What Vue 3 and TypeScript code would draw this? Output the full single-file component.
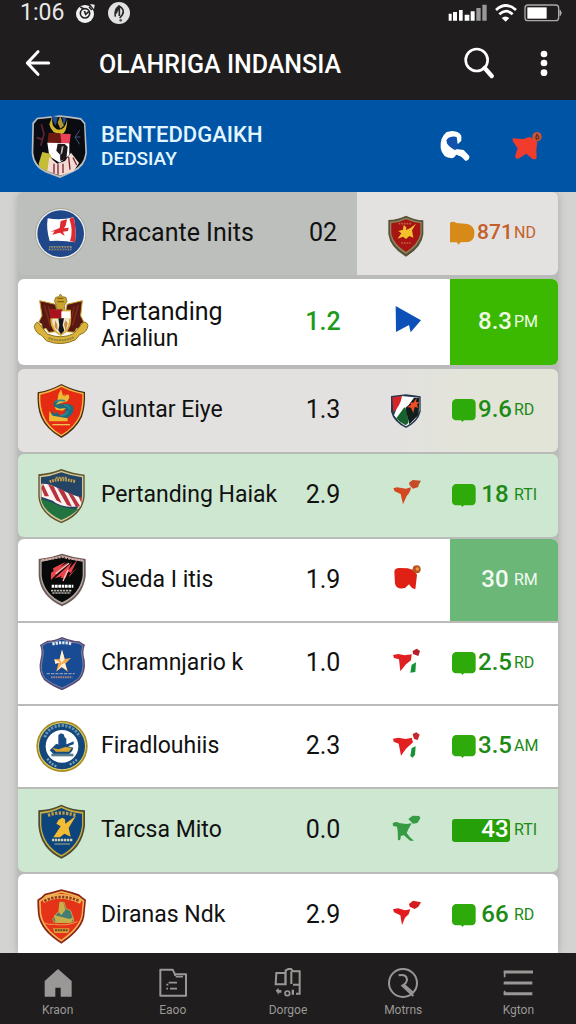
<script setup lang="ts">
interface Row {
  id: string
  name: string[]
  value: string
  stat: string
  unit: string
  tone: string
  crestBox: string
  markBox: string
  badge: 'bubble' | 'bell' | 'bar' | 'none'
}

const rows: Row[] = [
  { id: 'r1', name: ['Rracante Inits'], value: '02', stat: '871', unit: 'ND', tone: 'split', crestBox: '106 46 156 168', markBox: '306 70 96 120', badge: 'bell' },
  { id: 'r2', name: ['Pertanding', 'Arialiun'], value: '1.2', stat: '8.3', unit: 'PM', tone: 'featured', crestBox: '106 315 156 168', markBox: '306 339 96 120', badge: 'none' },
  { id: 'r3', name: ['Gluntar Eiye'], value: '1.3', stat: '9.6', unit: 'RD', tone: 'stone', crestBox: '106 54 156 168', markBox: '306 78 96 120', badge: 'bubble' },
  { id: 'r4', name: ['Pertanding Haiak'], value: '2.9', stat: '18', unit: 'RTI', tone: 'mint', crestBox: '106 309 156 168', markBox: '306 333 96 120', badge: 'bubble' },
  { id: 'r5', name: ['Sueda I itis'], value: '1.9', stat: '30', unit: 'RM', tone: 'solid', crestBox: '106 52 156 168', markBox: '306 76 96 120', badge: 'none' },
  { id: 'r6', name: ['Chramnjario k'], value: '1.0', stat: '2.5', unit: 'RD', tone: 'flat', crestBox: '106 303 156 168', markBox: '306 327 96 120', badge: 'bubble' },
  { id: 'r7', name: ['Firadlouhiis'], value: '2.3', stat: '3.5', unit: 'AM', tone: 'flat', crestBox: '106 57 156 168', markBox: '306 81 96 120', badge: 'bubble' },
  { id: 'r8', name: ['Tarcsa Mito'], value: '0.0', stat: '43', unit: 'RTI', tone: 'mint end', crestBox: '106 307 156 168', markBox: '306 331 96 120', badge: 'bar' },
  { id: 'r9', name: ['Diranas Ndk'], value: '2.9', stat: '66', unit: 'RD', tone: 'plain', crestBox: '106 559 156 168', markBox: '306 583 96 120', badge: 'bubble' },
]

const tabs = [
  { id: 'home', label: 'Kraon' },
  { id: 'folder', label: 'Eaoo' },
  { id: 'group', label: 'Dorgoe' },
  { id: 'search', label: 'Motrns' },
  { id: 'menu', label: 'Kgton' },
]
</script>

<template>
  <div class="app">
    <svg class="sprite" aria-hidden="true">
      <symbol id="crest-r1" viewBox="106 46 156 168">
        <circle cx="183" cy="129" r="77" fill="#a9a99a" />
        <circle cx="183" cy="129" r="74" fill="#eef0ee" />
        <circle cx="183" cy="129" r="70" fill="#1f4789" />
        <path d="M144 83 Q182 90 222 80 Q231 115 226 155 Q188 148 150 151 Q139 115 144 83Z" fill="#fff" />
        <path d="M209 84 L222 80 Q231 115 226 155 L211 151 Q222 120 209 84Z" fill="#df2b30" />
        <path d="M183 91 L202 86 L198 105 L193 113 L207 111 L205 121 L190 123 L195 136 L181 126 L158 132 L165 122 L152 123 L180 112Z" fill="#df2b30" />
        <path d="M148 167h68v5h-68zM147 174h69v5h-69z" fill="#b9b18f" opacity=".75" />
        <path d="M150 170h62M152 177h60" stroke="#3b3f4b" stroke-width="3" stroke-dasharray="5 3" />
      </symbol>
      <symbol id="crest-r2" viewBox="106 315 156 168">
        <path d="M120 335 L168 346 L176 390 L168 428 L147 430 L139 418 L128 422 L126 405 L117 400 L127 380Z" fill="#571712" stroke="#c9a52e" stroke-width="3" />
        <path d="M248 335 L202 346 L194 390 L202 428 L224 430 L231 418 L242 422 L244 405 L253 400 L243 380Z" fill="#571712" stroke="#c9a52e" stroke-width="3" />
        <path d="M134 348l18 62M146 352l14 56M236 348l-18 62M224 352l-14 56" stroke="#7d2a18" stroke-width="5" />
        <path d="M182 315l7 8 10 2 3 12-7 12v12h-24v-12l-7-12 4-12 9-2z" fill="#c9a52e" stroke="#76641b" stroke-width="2" />
        <path d="M174 328h17M173 338h20" stroke="#856515" stroke-width="4" />
        <path d="M152 362h62v35q-1 30-31 44-29-14-31-44z" fill="#d6ac31" />
        <path d="M151 361h37v27h-37z" fill="#a9131d" />
        <path d="M185 367h27v22h-27z" fill="#fff" />
        <path d="M158 389h50v12q-5 24-25 35-20-12-25-35z" fill="#efe7d0" />
        <path d="M176 388h17l-4 20 5 17-10 11-8-12 3-15z" fill="#171519" />
        <path d="M166 393l7 14v17l-8-10zM198 394l6 9-6 22-5-19z" fill="#c58a40" />
        <path d="M104 412 Q110 391 121 408 L143 435 Q184 452 222 434 L245 407 Q257 390 265 409 Q263 430 240 437 L228 452 Q183 474 140 455 L126 439 Q108 434 104 412Z" fill="#dbb33a" stroke="#8a7322" stroke-width="3" />
        <path d="M147 447 Q183 462 222 445" fill="none" stroke="#8d833b" stroke-width="6" stroke-dasharray="6 2" />
      </symbol>
      <symbol id="crest-r3" viewBox="106 54 156 168">
        <path d="M185 57 Q220 75 256 81 Q258 124 247 155 Q229 194 185 219 Q139 193 124 157 Q111 126 114 82 Q154 75 185 57Z" fill="#4a2c14" />
        <path d="M185 61 Q218 78 252 84 Q254 124 243 154 Q226 190 185 214 Q143 190 128 155 Q115 124 118 85 Q154 78 185 61Z" fill="#f2ba45" />
        <path d="M185 66 Q216 82 248 88 Q249 125 239 152 Q223 187 185 209 Q146 186 132 152 Q121 125 122 89 Q156 82 185 66Z" fill="#e52b12" />
        <path d="M204 91 Q162 101 161 119 Q167 136 196 132 Q203 143 181 153 L173 141 Q162 153 158 137 Q149 154 157 159 Q184 174 204 158 Q228 144 220 124 Q208 111 184 119 Q185 107 210 103Z" fill="#1d6b7e" />
        <path d="M184 72l6 20 7-6-7 15-17 6 3-18zM203 88q12 4 0 21l-35 10q21-23 35-31zM149 138l10 14 45 8v9h-56zM165 125l14 6 20-2-10 8-20-3z" fill="#efb934" />
        <path d="M167 110q18-7 29-2M193 120q16 2 17 13M183 151q17 1 22-13" fill="none" stroke="#2d8b91" stroke-width="5" />
        <path d="M158 179h53" stroke="#f0c151" stroke-width="4" />
      </symbol>
      <symbol id="crest-r4" viewBox="106 309 156 168">
        <path d="M185 312 Q216 324 255 329 V394 Q251 448 185 475 Q119 447 116 394 V328 Q153 325 185 312Z" fill="#5d552f" />
        <path d="M185 317 Q216 329 251 333 V394 Q247 443 185 470 Q123 443 120 394 V333 Q153 330 185 317Z" fill="#d7ca97" />
        <path d="M185 322 Q216 333 247 337 V393 Q243 438 185 464 Q127 438 124 393 V337 Q154 334 185 322Z" fill="#244465" />
        <path d="M125 356 Q150 355 180 372 T246 398 L243 424 Q184 430 159 407 L125 395Z" fill="#fff2ef" />
        <path d="M125 370l10 24h13l-18-38zM145 358l25 48 16 9-24-51zM173 369l29 51 15 5-25-49zM204 382l25 44 12-3-21-33zM237 395l8 19 2-18z" fill="#b53440" />
        <path d="M124 401 L158 413 Q195 432 236 432 Q215 454 185 464 Q132 441 124 401Z" fill="#217440" />
        <path d="M150 350q34-12 78 0" fill="none" stroke="#c8a44d" stroke-width="9" stroke-dasharray="5 3" />
        <path d="M168 338h34" stroke="#b99a51" stroke-width="6" stroke-dasharray="6 3" />
      </symbol>
      <symbol id="crest-r5" viewBox="106 52 156 168">
        <path d="M187 57 Q219 68 258 73 V125 Q250 188 187 215 Q123 186 117 125 V73 Q155 69 187 57Z" fill="#6e5a58" />
        <path d="M187 62 Q218 73 253 77 V124 Q245 183 187 209 Q129 182 122 124 V77 Q156 73 187 62Z" fill="#b3aaa6" />
        <path d="M187 65 Q218 77 249 81 V124 Q241 178 187 203 Q133 178 126 124 V81 Q156 77 187 65Z" fill="#080909" />
        <path d="M126 77q34-6 62-10 31 7 60 10" stroke="#d9aaa2" stroke-width="6" fill="none" stroke-dasharray="7 3" />
        <path d="M160 101l38-20-35 35zM154 114l52-32-52 54zM165 131l52-48-31 42zM182 131l34-49-18 47zM203 110l30-34-19 39zM210 120l24-23-26 30z" fill="#ec444d" />
        <path d="M168 117l40-31M190 139l15-34" stroke="#ffc8c2" stroke-width="4" />
        <path d="M156 155h65" stroke="#fff" stroke-width="9" stroke-dasharray="8 2" />
        <path d="M154 168h62M158 175h55" stroke="#b6b3ac" stroke-width="5" stroke-dasharray="7 2" />
      </symbol>
      <symbol id="crest-r6" viewBox="106 303 156 168">
        <path d="M187 306 Q216 318 239 319 Q248 326 256 329 Q247 350 255 375 Q260 411 240 435 Q221 450 187 466 Q155 453 133 435 Q113 410 123 370 Q129 349 121 330 Q132 322 143 317 Q166 317 187 306Z" fill="#5b4973" />
        <path d="M187 312 Q214 324 238 325 L249 332 Q242 351 249 376 Q254 409 236 431 Q217 446 187 459 Q156 446 137 431 Q119 409 128 374 Q134 349 127 332 L143 323 Q166 323 187 312Z" fill="#184b93" stroke="#93a0b4" stroke-width="2" />
        <path d="M187 344l8 28 19-3-17 17 8 25-19-15-16 14 6-25-13-13 17 1z" fill="#f6a84f" />
        <path d="M187 344l8 28-9 13-6-13zM186 388l10-4 6 22-16-10-15 12zM164 373l18 9-15 5z" fill="#fff0d2" />
        <path d="M158 327q29-8 59 0" stroke="#e4ecf1" stroke-width="9" fill="none" stroke-dasharray="7 3" />
        <path d="M141 416h84" stroke="#8d9cae" stroke-width="4" stroke-dasharray="10 3" />
        <path d="M154 427h64" stroke="#a68384" stroke-width="6" stroke-dasharray="5 2" />
      </symbol>
      <symbol id="crest-r7" viewBox="106 57 156 168">
        <circle cx="187" cy="139" r="77" fill="#a88d24" />
        <circle cx="187" cy="139" r="72" fill="#e2d26e" />
        <circle cx="187" cy="139" r="69" fill="#13477c" />
        <circle cx="187" cy="139" r="49" fill="#fff" />
        <path d="M135 112 Q147 79 186 76 Q225 78 239 110" fill="none" stroke="#6893ad" stroke-width="9" stroke-dasharray="7 4" />
        <path d="M143 176 Q154 193 171 199M210 193 Q226 187 234 175" fill="none" stroke="#86a4b5" stroke-width="7" stroke-dasharray="6 4" />
        <path d="M176 106l7-6 9 3 3 9 5 4v20h-24z" fill="#164b84" />
        <path d="M150 151l20-20q20 10 52-7v9l-17 6 16 4q-1 10-13 20h-46z" fill="#174981" />
        <path d="M158 144l19 4 20-7 20 2-9 12h-39z" fill="#d5a52f" />
        <path d="M155 165h66" stroke="#557d8e" stroke-width="8" />
      </symbol>
      <symbol id="crest-r8" viewBox="106 307 156 168">
        <path d="M185 312 Q216 327 256 329 V375 Q248 444 185 474 Q122 444 116 375 V329 Q154 327 185 312Z" fill="#4b4a32" />
        <path d="M185 317 Q216 332 251 334 V375 Q243 439 185 468 Q127 439 121 375 V334 Q155 332 185 317Z" fill="#c8ac41" />
        <path d="M185 322 Q216 337 247 339 V375 Q239 434 185 463 Q131 434 125 375 V339 Q155 337 185 322Z" fill="#0c447b" />
        <path d="M145 344q35-14 85 0" fill="none" stroke="#bd9a4a" stroke-width="10" stroke-dasharray="7 4" />
        <path d="M177 357l11-6 8 5 1 13 32-24-22 37 6 26-19-9-13 11h-20l22-33-13-8z" fill="#f4bc32" />
        <path d="M157 418h61" stroke="#d0d0b4" stroke-width="8" stroke-dasharray="7 2" />
        <path d="M164 430h47" stroke="#829484" stroke-width="4" />
      </symbol>
      <symbol id="crest-r9" viewBox="106 559 156 168">
        <path d="M185 563 Q215 570 238 578 Q247 587 259 594 Q257 614 255 634 Q254 681 185 726 Q121 687 115 638 Q113 616 113 594 Q127 586 135 576 Q159 571 185 563Z" fill="#8b2518" />
        <path d="M185 568 Q215 575 236 583 L254 597 L250 635 Q248 678 185 720 Q126 682 120 637 L118 597 Q132 589 138 581 Q162 575 185 568Z" fill="#f2b451" />
        <path d="M185 573 Q214 580 234 588 L249 600 L246 635 Q243 674 185 714 Q131 679 125 636 L123 600 L140 586 Q163 580 185 573Z" fill="#e53319" />
        <path d="M130 598 Q179 569 244 600" fill="none" stroke="#efb252" stroke-width="14" />
        <path d="M134 598 Q181 574 240 598" fill="none" stroke="#8e3922" stroke-width="8" stroke-dasharray="7 4" />
        <path d="M181 602l13 1 4 17 15 7 10 31-15 5-44-1-5-9 13-19 9-5z" fill="#457c74" stroke="#c4a13d" stroke-width="3" />
        <path d="M180 600l11 2 6 24-13 15-8-12zM163 640l47 12 13-6-9 17h-46z" fill="#c7b04b" />
        <path d="M134 664q12 6 31 4 37 6 68-8" fill="none" stroke="#eb9b52" stroke-width="3" />
        <path d="M160 680h50l-4 14h-42z" fill="#dc9e3d" />
        <path d="M166 686h39" stroke="#664a20" stroke-width="6" stroke-dasharray="6 2" />
      </symbol>

      <symbol id="mark-r1" viewBox="306 70 96 120">
        <path d="M354 75 Q378 87 406 89 V131 Q401 171 354 198 Q307 172 301 131 V88 Q330 87 354 75Z" fill="#56533a" />
        <path d="M354 81 Q378 91 401 94 V130 Q395 164 354 190 Q313 166 306 130 V93 Q331 92 354 81Z" fill="#918358" />
        <path d="M354 86 Q377 96 397 98 V130 Q390 160 354 184 Q317 160 310 130 V98 Q333 96 354 86Z" fill="#a71414" />
        <path d="M347 103l8 7-1 8 12-5 18-14-12 20 4 22-12-5-10 9-9-7-16 6 11-16-9-7 14-4z" fill="#f2c32d" />
        <path d="M332 99h40M340 157h28" stroke="#c3633e" stroke-width="5" stroke-dasharray="5 3" />
      </symbol>
      <symbol id="mark-r2" viewBox="306 339 96 120">
        <path d="M323 351 L399 394 L368 430 L363 408 L324 429Z" fill="#0b51b7" />
      </symbol>
      <symbol id="mark-r3" viewBox="306 78 96 120">
        <path d="M354 88 Q378 91 398 94 V140 Q391 170 354 189 Q316 170 309 140 V93Z" fill="#28394f" />
        <path d="M340 93 L394 98 V138 Q388 166 354 184 Q341 177 332 168 L318 151Z" fill="#fff" />
        <path d="M313 97 L342 93 Q338 121 316 142Z" fill="#d32627" />
        <path d="M325 160 L349 127 Q359 137 361 174 L353 181Q336 174 325 160Z" fill="#16612d" />
        <path d="M362 120 L378 98 L394 99 L392 149 L364 178 L352 129Z" fill="#101f1c" />
        <path d="M386 98l-2 14 10-2-7 9 4 9-11-2-4 18-7-16-11-2 12-7-5-7 11 1z" fill="#f04c25" />
      </symbol>
      <symbol id="mark-r4" viewBox="306 333 96 120">
        <path d="M316 370 L327 367 L354 371 L369 367 Q367 383 356 393 L345 418 L338 387 L320 379Z" fill="#d44820" />
        <path d="M363 353 L374 345 L399 347 L392 359 L391 366 L375 371 L365 361Z" fill="#c64c27" />
      </symbol>
      <symbol id="mark-r5" viewBox="306 76 96 120">
        <path d="M319 111 Q320 100 334 100 L359 101 L376 106 L387 120 L382 164 L372 160 L363 149 L351 160 Q326 166 321 147Z" fill="#df2014" />
        <circle cx="386" cy="104" r="12" fill="#b95422" />
        <circle cx="388" cy="103" r="5" fill="#ec9840" />
      </symbol>
      <symbol id="mark-r6" viewBox="306 327 96 120">
        <path d="M315 360 L331 357 L350 361 L371 358 L369 376 L354 388 L337 409 L333 373 L318 369Z" fill="#e02020" />
        <path d="M374 348 L386 341 L396 348 L391 363 L375 357Z" fill="#b91d2a" />
        <path d="M371 389 L384 382 L382 411 L367 413Z" fill="#159334" />
      </symbol>
      <symbol id="mark-r7" viewBox="306 81 96 120">
        <path d="M315 116 L331 113 L353 117 L371 113 L375 127 L354 146 L339 167 L332 131 L317 125Z" fill="#e32020" />
        <path d="M374 102 L385 97 L395 104 L389 120 L378 117Z" fill="#c92730" />
        <path d="M371 144 L383 139 L381 164 L374 173 L367 168Z" fill="#159334" />
      </symbol>
      <symbol id="mark-r8" viewBox="306 331 96 120">
        <path d="M314 368 Q325 361 333 367 L355 370 L371 368 L361 386 L356 397 L366 410 L378 420 L366 420 L348 404 L339 405 L336 419 L330 418 L329 391 L327 378 L315 376Z" fill="#369b42" />
        <path d="M361 355 L374 345 L394 346 L397 353 L388 367 L375 369Z" fill="#369b42" />
      </symbol>
      <symbol id="mark-r9" viewBox="306 583 96 120">
        <path d="M315 623 L330 620 L351 626 L367 623 L362 638 L351 648 L342 670 L337 641 L318 632Z" fill="#e01c1f" />
        <path d="M363 607 L375 597 L399 602 L391 615 L380 622 L365 615Z" fill="#d41c20" />
      </symbol>

      <symbol id="badge-bubble" viewBox="492 96 72 72">
        <path d="M502 99h50q11 2 11 13v40q-1 9-9 11h-26l-5 5-4-5h-18q-8-2-9-10v-43q1-8 10-11z" fill="#2eaa0a" />
      </symbol>
      <symbol id="badge-bell" viewBox="483 92 78 72">
        <path d="M486 97 Q495 91 505 98 L539 101 Q560 108 559 128 Q560 151 541 155 L517 156 L512 163 L506 156 H486Z" fill="#d88a18" />
      </symbol>

      <symbol id="tab-home" viewBox="125 70 90 90">
        <path d="M170 73l41 36v47h-33v-27h-16v27h-32v-47z" fill="currentColor" />
      </symbol>
      <symbol id="tab-folder" viewBox="465 70 90 90">
        <path d="M472 75h37l7 14h33v64h-77z" fill="none" stroke="currentColor" stroke-width="6" stroke-linejoin="round" />
        <path d="M516 94v-8M518 96h22M497 114h25M490 132h5M501 132h21M490 120h6" stroke="currentColor" stroke-width="5" />
      </symbol>
      <symbol id="tab-group" viewBox="810 70 90 90">
        <path d="M820 85h27v34h-29zM848 122V77l8-4h8l7 7h19v40h-20M890 120v27h-11M865 80v38" fill="none" stroke="currentColor" stroke-width="6" />
        <path d="M818 137l9-7v6h8v8h-8v7zM866 150v-15h7v15z" fill="currentColor" />
        <circle cx="853" cy="146" r="7" fill="none" stroke="currentColor" stroke-width="5" />
      </symbol>
      <symbol id="tab-search" viewBox="304 70 90 90">
        <circle cx="349" cy="115" r="42" fill="none" stroke="currentColor" stroke-width="6" />
        <path d="M336 92q23-5 25 12 0 12-14 19l33 31M354 122l26 23" fill="none" stroke="currentColor" stroke-width="6" />
      </symbol>
      <symbol id="tab-menu" viewBox="654 70 90 90">
        <path d="M656 82h88M656 115h86M656 147h86" stroke="currentColor" stroke-width="9" />
        <path d="M659 82v16M659 138v10" stroke="currentColor" stroke-width="5" />
      </symbol>
    </svg>

    <div class="status">
      <div class="status-left">
        <span class="time">1:06</span>
        <svg width="22" height="22" viewBox="225 2 66 66" aria-hidden="true">
          <circle cx="255" cy="38" r="27" fill="#f2f2f2" />
          <path d="M270 8l14 2-2 14z" fill="#f2f2f2" />
          <circle cx="255" cy="36" r="14" fill="none" stroke="#252424" stroke-width="5" />
          <path d="M241 17l11 6M267 17l9 9M253 29l4 10 9-8" stroke="#252424" stroke-width="5" fill="none" />
        </svg>
        <svg width="22" height="22" viewBox="323 2 66 66" aria-hidden="true">
          <circle cx="356" cy="35" r="33" fill="#e2e2e2" />
          <path d="M345 46q-4-20 11-32 20 10 9 28l-7 8M357 17v27M347 36l8-18" fill="none" stroke="#292828" stroke-width="5" />
          <circle cx="361" cy="57" r="4" fill="#555" />
        </svg>
      </div>
      <div class="status-right">
        <svg width="40" height="18" viewBox="480 12 120 54" aria-hidden="true">
          <path d="M482 41h9v21h-9zM495 36h12v26h-12zM513 30h11v32h-11zM530 44h14v18h-14zM548 34h12v28h-12z" fill="#fff" />
          <path d="M565 24h13v38h-13zM583 14h13v48h-13z" fill="#999" />
        </svg>
        <svg width="22" height="18" viewBox="619 10 66 54" aria-hidden="true">
          <path d="M622 28q29-27 60 0M632 41q20-19 40 0" fill="none" stroke="#fff" stroke-width="8" />
          <path d="M639 52q11-9 23 0l-11 11z" fill="#fff" />
        </svg>
        <svg width="39" height="18" viewBox="708 10 117 54" aria-hidden="true">
          <rect x="711" y="13" width="101" height="47" rx="9" fill="none" stroke="#aaa" stroke-width="4" />
          <path d="M718 20h58v34h-58z" fill="#fff" />
          <path d="M816 29q8 7 0 16z" fill="#aaa" stroke="#aaa" stroke-width="3" />
        </svg>
      </div>
    </div>

    <header class="toolbar">
      <button class="back" type="button" aria-label="Kembali">
        <svg width="28" height="28" viewBox="71 148 84 84">
          <path d="M145 190H84M113 156l-32 34 32 34" fill="none" stroke="#fff" stroke-width="9" stroke-linecap="round" stroke-linejoin="round" />
        </svg>
      </button>
      <h1>OLAHRIGA INDANSIA</h1>
      <button type="button" aria-label="Cari">
        <svg width="32" height="32" viewBox="523 143 96 96">
          <circle cx="564" cy="182" r="33" fill="none" stroke="#fff" stroke-width="8" />
          <path d="M588 206l21 24" stroke="#fff" stroke-width="13" stroke-linecap="round" />
        </svg>
      </button>
      <button class="more" type="button" aria-label="Menu lainnya">
        <svg width="8" height="28" viewBox="755 148 24 84">
          <circle cx="767" cy="163" r="10" fill="#fff" />
          <circle cx="767" cy="190" r="10" fill="#fff" />
          <circle cx="767" cy="219" r="10" fill="#fff" />
        </svg>
      </button>
    </header>

    <section class="banner">
      <svg width="58" height="66" viewBox="94 340 174 198" aria-hidden="true">
        <path d="M181 347 Q214 350 244 355 L257 370 L262 460 Q258 501 221 517 L181 535 L139 519 Q99 502 96 460 L98 369 L112 354Z" fill="#b9bdc0" />
        <path d="M181 352 Q214 355 242 360 L253 373 L257 460 Q252 497 219 512 L181 529 L141 513 Q104 497 101 460 L103 372 L114 359Z" fill="#0b0c11" />
        <path d="M158 350q-4 31 13 39 25 7 32-31-1 42-17 45-31 1-37-29z" fill="#d1b629" />
        <path d="M155 348q5 19 13 30l7-26zM187 351q6 15 2 33l11-27z" fill="#234f92" />
        <path d="M174 369l8-21 10 30-10 9z" fill="#b39a2a" />
        <path d="M147 399l36 2 1 31h-41z" fill="#6d1a13" />
        <path d="M182 402l31 1-3 27-25 3z" fill="#ed4059" />
        <path d="M143 429 L209 431 L209 466 L180 489 L149 470Z" fill="#fff" />
        <path d="M174 432l21 1 9 8-4 36-18 7-1-19-11-12z" fill="#1b171a" />
        <path d="M186 441l6-2-4 20-6 9z" fill="#bbb" />
        <path d="M117 492 L128 457 L151 462 L158 480 L147 517 L120 503Z" fill="#c6bd36" />
        <path d="M149 472 L173 492 L196 484 L214 459 L238 490 L222 514 L181 528 L143 514Z" fill="#f2dbd4" />
        <path d="M163 492v29M175 494v31M190 492v28M207 472l4 38M220 474l11 22" stroke="#7e2632" stroke-width="4" />
        <path d="M240 392l-14 20 14 22M226 412h16" stroke="#45557e" stroke-width="3" fill="none" />
        <path d="M125 374l8 30-10 34M111 414l16 5" stroke="#612332" stroke-width="5" fill="none" />
      </svg>
      <h2><span>BENTEDDGAIKH</span><small>DEDSIAY</small></h2>
      <button type="button" aria-label="Telepon">
        <svg width="32" height="32" viewBox="452 384 96 96">
          <path d="M492 387 Q512 388 519 401 L519 416 L508 427 L505 405 Q486 400 475 415 Q473 430 493 438 L505 453 Q503 465 491 469 Q462 468 457 438 Q454 407 475 390Z" fill="#fff" />
          <path d="M497 440l29 4 17 18q2 12-11 15l-13-13-20-8z" fill="#fff" />
          <path d="M475 415q7-14 26-8l10 32-11 5q-21-8-25-29z" fill="#1252ad" />
        </svg>
      </button>
      <button class="favorite" type="button" aria-label="Favorit">
        <svg width="32" height="32" viewBox="668 384 96 96">
          <path d="M673 409 L692 410 L707 411 L721 405 L741 410 L747 421 L744 443 L745 468 Q740 475 732 471 L714 455 L690 470 Q679 471 681 460 L688 439 L673 417Z" fill="#f03b2d" />
          <circle cx="746" cy="404" r="14" fill="#c75735" />
          <path d="M746 397q-5 7-2 15 9-1 7-7z" fill="none" stroke="#6d2a27" stroke-width="4" />
        </svg>
      </button>
    </section>

    <main class="content">
      <ul class="rows">
        <li v-for="row in rows" :key="row.id" class="row" :class="row.tone">
          <svg class="crest" width="52" height="56" :viewBox="row.crestBox" aria-hidden="true">
            <use :href="'#crest-' + row.id" :x="row.crestBox.split(' ')[0]" :y="row.crestBox.split(' ')[1]" width="156" height="168" />
          </svg>
          <h3 class="name"><span v-for="line in row.name" :key="line">{{ line }}</span></h3>
          <span class="value">{{ row.value }}</span>
          <svg class="mark" width="32" height="40" :viewBox="row.markBox" aria-hidden="true">
            <use :href="'#mark-' + row.id" :x="row.markBox.split(' ')[0]" :y="row.markBox.split(' ')[1]" width="96" height="120" />
          </svg>
          <div class="stat" :class="row.badge">
            <span class="badge">
              <svg v-if="row.badge === 'bubble'" width="24" height="24" aria-hidden="true"><use href="#badge-bubble" width="24" height="24" /></svg>
              <svg v-if="row.badge === 'bell'" width="26" height="24" aria-hidden="true"><use href="#badge-bell" width="26" height="24" /></svg>
            </span>
            <span class="number">{{ row.stat }}</span>
            <span class="unit">{{ row.unit }}</span>
          </div>
        </li>
      </ul>
    </main>

    <nav class="tabs" aria-label="Navigasi utama">
      <a v-for="tab in tabs" :key="tab.id" :href="'#' + tab.id">
        <svg width="30" height="30" aria-hidden="true"><use :href="'#tab-' + tab.id" width="30" height="30" /></svg>
        <span>{{ tab.label }}</span>
      </a>
    </nav>
  </div>
</template>

<style>
body {
  margin: 0;
  background: #d3d4d2;
}
</style>

<style scoped>
.app {
  display: flex;
  flex-direction: column;
  height: 100vh;
  overflow: hidden;
  background: #d3d4d2;
  color: #111;
  font-family: Roboto, "Liberation Sans", sans-serif;
}
.sprite {
  position: absolute;
  width: 0;
  height: 0;
}
.sprite symbol,
.crest,
.mark {
  overflow: visible;
}
svg {
  display: block;
  flex: none;
}
button {
  display: flex;
  padding: 0;
  border: 0;
  background: none;
  cursor: pointer;
}
h1,
h2,
h3 {
  margin: 0;
  font-weight: 400;
}
.status {
  display: flex;
  flex: none;
  justify-content: space-between;
  height: 26px;
  padding: 0 13px 0 20px;
  background: #1f1d1d;
}
.status-left,
.status-right {
  display: flex;
  align-items: center;
}
.status-left {
  gap: 11px;
}
.status-right {
  gap: 7px;
}
.time {
  color: #e8e8e8;
  font-size: 23px;
  line-height: 26px;
}
.toolbar {
  display: flex;
  flex: none;
  align-items: center;
  height: 74px;
  padding: 0 28px 0 24px;
  background: #1f1d1d;
  color: #fff;
}
.back {
  width: 75px;
}
.toolbar h1 {
  flex: 1;
  padding-top: 4px;
  font-size: 25px;
  font-weight: 500;
  line-height: 32px;
}
.more {
  margin-left: 45px;
}
.banner {
  display: flex;
  flex: none;
  align-items: center;
  height: 92px;
  padding: 0 33px 0 31px;
  background: #0054a6;
}
.banner h2 {
  display: flex;
  flex: 1;
  flex-direction: column;
  padding-left: 12px;
  color: #e3f6ff;
  font-weight: 500;
}
.banner h2 span {
  font-size: 22px;
  line-height: 25px;
}
.banner h2 small {
  font-size: 19px;
  line-height: 24px;
}
.favorite {
  margin-left: 40px;
}
.content {
  flex: 1;
  min-height: 0;
  padding: 0 18px;
  overflow-y: auto;
  scrollbar-width: none;
}
.rows {
  margin: 0;
  padding: 0;
  list-style: none;
  background: #b9bbb9;
  border-radius: 8px;
  box-shadow: 0 0 8px #a6a8a6;
}
.row {
  display: grid;
  grid-template-columns: 66px minmax(0, 1fr) 78px 88px 108px;
  align-items: center;
  min-height: 83px;
  padding-left: 17px;
  margin-bottom: 2px;
  border-radius: 6px;
  background: #fff;
}
.split {
  margin-bottom: 4px;
  background: linear-gradient(to left, #e4e2e0 201px, #bdbfbc 201px);
}
.featured {
  min-height: 86px;
  margin-bottom: 4px;
}
.stone {
  background: linear-gradient(to right, #e2e1e0 70%, #e3e4d8 85%);
}
.mint {
  background: #cde7d1;
}
.solid {
  min-height: 82px;
  border-radius: 6px 6px 0 0;
}
.flat {
  min-height: 81px;
  border-radius: 0;
}
.end {
  border-radius: 0 0 6px 6px;
}
.name {
  display: flex;
  flex-direction: column;
  padding-bottom: 2px;
  font-size: 23px;
  line-height: 27px;
  white-space: nowrap;
}
.split .name,
.featured .name span:first-child {
  font-size: 25px;
}
.featured .name {
  padding: 6px 0 0;
}
.value {
  padding-bottom: 2px;
  font-size: 25px;
  line-height: 27px;
  text-align: center;
}
.featured .value {
  color: #1e9a1b;
  font-weight: 500;
}
.mark {
  justify-self: center;
}
.stat {
  position: relative;
  display: grid;
  grid-template-columns: 24px 36px 26px;
  column-gap: 1px;
  align-items: center;
  align-self: stretch;
  box-sizing: border-box;
  padding: 0 0 2px 2px;
  color: #1c8a14;
}
.number {
  position: relative;
  font-size: 24px;
  font-weight: 500;
  line-height: 27px;
  text-align: center;
}
.unit {
  font-size: 16px;
  line-height: 27px;
}
.bell {
  color: #c3602a;
}
.bell .badge {
  margin-left: -3px;
}
.bell .number {
  font-size: 21px;
}
.featured .stat {
  border-radius: 0 6px 6px 0;
  background: #3bb800;
  color: #effbe6;
}
.solid .stat {
  border-radius: 0 6px 0 0;
  background: #6bb778;
  color: #f2fbf2;
}
.bar .badge {
  position: absolute;
  left: 2px;
  width: 58px;
  height: 23px;
  align-self: center;
  border-radius: 3px;
  background: #25a008;
}
.bar .number {
  grid-column: 2;
  color: #fff;
}
.tabs {
  display: grid;
  flex: none;
  grid-template-columns: repeat(5, 1fr);
  height: 71px;
  background: #1f1d1d;
}
.tabs a {
  display: flex;
  flex-direction: column;
  align-items: center;
  gap: 4px;
  padding-top: 15px;
  color: #999896;
  font-size: 12px;
  line-height: 16px;
  text-decoration: none;
}
</style>
